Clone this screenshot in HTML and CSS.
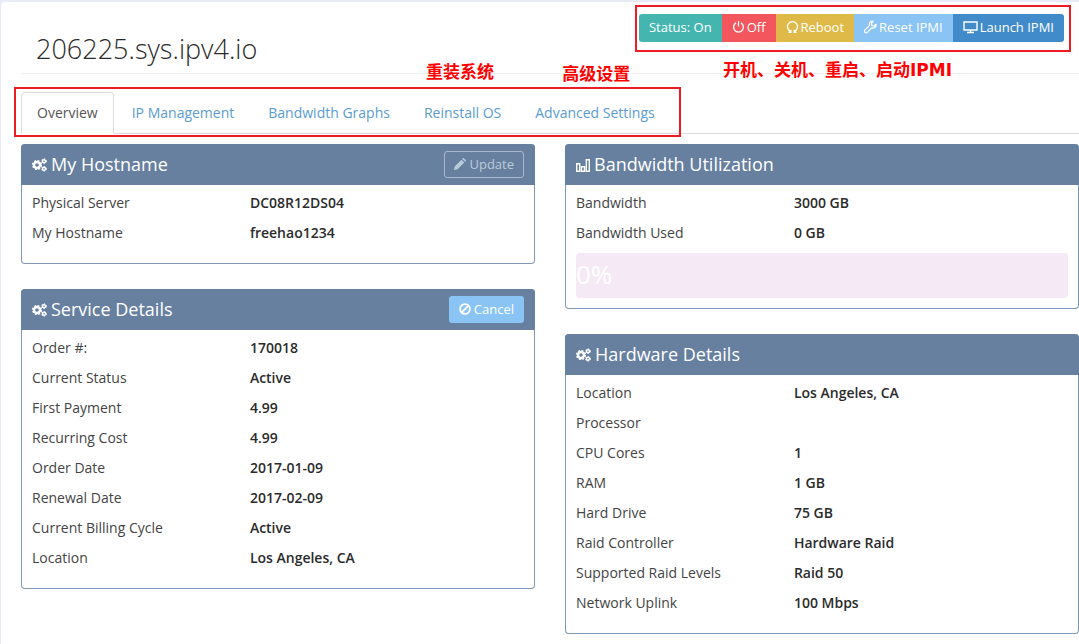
FILE: index.html
```html
<!DOCTYPE html>
<html lang="en">
<head>
<meta charset="utf-8">
<title>206225.sys.ipv4.io</title>
<link rel="stylesheet" href="styles.css">
</head>
<body>
<svg class="sprite" aria-hidden="true">
  <symbol id="cogs" viewBox="0 0 15 14">
    <circle cx="5" cy="7" r="3" fill="none" stroke="currentColor" stroke-width="2.4"/>
    <circle cx="5" cy="7" r="4.3" fill="none" stroke="currentColor" stroke-width="1.6" stroke-dasharray="1.9 1.48"/>
    <circle cx="12" cy="3.2" r="1.5" fill="none" stroke="currentColor" stroke-width="1.4"/>
    <circle cx="12" cy="3.2" r="2.4" fill="none" stroke="currentColor" stroke-width="1" stroke-dasharray="1.3 1.2"/>
    <circle cx="12" cy="10.8" r="1.5" fill="none" stroke="currentColor" stroke-width="1.4"/>
    <circle cx="12" cy="10.8" r="2.4" fill="none" stroke="currentColor" stroke-width="1" stroke-dasharray="1.3 1.2"/>
  </symbol>
</svg>
<main class="page">
  <header class="page-head">
    <h1 class="title">206225.sys.ipv4.io</h1>
    <div class="toolbar">
      <button class="btn status">Status: On</button>
      <button class="btn off"><svg class="icon" viewBox="0 0 14 14"><path d="M4.4 2.5a5.3 5.3 0 1 0 5.2 0M7 .5v6" fill="none" stroke="currentColor" stroke-width="1.4"/></svg>Off</button>
      <button class="btn reboot"><svg class="icon" viewBox="0 0 14 14"><path d="M5 11.6A5.400 5.400 0 1 1 9 11.600M2.600 12.800h2.600V10M11.400 12.800h-2.600V10" fill="none" stroke="currentColor" stroke-width="1.4"/></svg>Reboot</button>
      <button class="btn reset"><svg class="icon" viewBox="0 0 14 14"><path d="M9.8.9a3.4 3.4 0 0 0-3.9 4.6L1 10.3a1.7 1.7 0 0 0 2.5 2.5l4.9-4.9A3.4 3.4 0 0 0 13 4L10.900 5.900 8.500 5.400 8 3Z" fill="none" stroke="currentColor" stroke-width="1.4" stroke-linejoin="round"/></svg>Reset IPMI</button>
      <button class="btn launch"><svg class="icon icon-wide" viewBox="0 0 15 14"><path d="M1 2h13v8H1ZM4 12.500h7M7.500 10v2.500" fill="none" stroke="currentColor" stroke-width="1.4"/></svg>Launch IPMI</button>
      <p class="note note-power">开机、关机、重启、启动IPMI</p>
    </div>
  </header>
  <nav class="tabs">
    <a class="tab active" href="#overview">Overview</a>
    <a class="tab" href="#ip">IP Management</a>
    <a class="tab" href="#graphs">Bandwidth Graphs</a>
    <a class="tab" href="#reinstall">Reinstall OS<span class="note note-tab">重装系统</span></a>
    <a class="tab" href="#advanced">Advanced Settings<span class="note note-tab note-advanced">高级设置</span></a>
    <span class="frame"></span>
  </nav>
  <div class="columns">
    <div class="column">
      <section class="panel">
        <div class="panel-head">
          <h2 class="panel-title"><svg class="cogs"><use href="#cogs"/></svg>My Hostname</h2>
          <button class="btn small outline"><svg class="icon-s" viewBox="0 0 12 12"><path d="M0 12l.7-3.600L7.400 1.700l2.900 2.900L3.600 11.300ZM8.200.9l.6-.6q.5-.5 1.100 0l1.800 1.800q.5.5 0 1.100l-.6.600Z" fill="currentColor"/></svg>Update</button>
        </div>
        <dl class="details">
          <dt>Physical Server</dt><dd>DC08R12DS04</dd>
          <dt>My Hostname</dt><dd>freehao1234</dd>
        </dl>
      </section>
      <section class="panel">
        <div class="panel-head">
          <h2 class="panel-title"><svg class="cogs"><use href="#cogs"/></svg>Service Details</h2>
          <button class="btn small cancel"><svg class="icon-s" viewBox="0 0 12 12"><path d="M2.600 9.400l6.800-6.800" stroke="currentColor" stroke-width="1.800"/><circle cx="6" cy="6" r="4.900" fill="none" stroke="currentColor" stroke-width="1.900"/></svg>Cancel</button>
        </div>
        <dl class="details">
          <dt>Order #:</dt><dd>170018</dd>
          <dt>Current Status</dt><dd>Active</dd>
          <dt>First Payment</dt><dd>4.99</dd>
          <dt>Recurring Cost</dt><dd>4.99</dd>
          <dt>Order Date</dt><dd>2017-01-09</dd>
          <dt>Renewal Date</dt><dd>2017-02-09</dd>
          <dt>Current Billing Cycle</dt><dd>Active</dd>
          <dt>Location</dt><dd>Los Angeles, CA</dd>
        </dl>
      </section>
    </div>
    <div class="column">
      <section class="panel">
        <div class="panel-head">
          <h2 class="panel-title"><svg class="bars" viewBox="0 0 14 14"><path d="M.7 5.700h3v7.600h-3ZM5.500 8.700h3v4.600h-3ZM10.300 1.700h3v11.600h-3Z" fill="none" stroke="currentColor" stroke-width="1.400"/></svg>Bandwidth Utilization</h2>
        </div>
        <dl class="details with-meter">
          <dt>Bandwidth</dt><dd>3000 GB</dd>
          <dt>Bandwidth Used</dt><dd>0 GB</dd>
        </dl>
        <div class="meter">0%</div>
      </section>
      <section class="panel">
        <div class="panel-head">
          <h2 class="panel-title"><svg class="cogs"><use href="#cogs"/></svg>Hardware Details</h2>
        </div>
        <dl class="details">
          <dt>Location</dt><dd>Los Angeles, CA</dd>
          <dt>Processor</dt><dd></dd>
          <dt>CPU Cores</dt><dd>1</dd>
          <dt>RAM</dt><dd>1 GB</dd>
          <dt>Hard Drive</dt><dd>75 GB</dd>
          <dt>Raid Controller</dt><dd>Hardware Raid</dd>
          <dt>Supported Raid Levels</dt><dd>Raid 50</dd>
          <dt>Network Uplink</dt><dd>100 Mbps</dd>
        </dl>
      </section>
    </div>
  </div>
</main>
</body>
</html>
```
FILE: styles.css
```css
* { box-sizing: border-box; }
body {
  margin: 0;
  padding: 2px 0 0 1px;
  background: #e8ebf7;
  color: #2b2b2b;
  font: 400 14px/20px "Open Sans", "Noto Sans CJK SC", sans-serif;
}
h1, h2, p, dl, dd { margin: 0; font-weight: inherit; }
.sprite { position: absolute; width: 0; height: 0; }
.page {
  min-height: calc(100vh - 2px);
  padding: 0 0 10px 20px;
  background: #fff;
  border-radius: 4px 0 0 0;
}
.page-head {
  display: flex;
  justify-content: space-between;
  align-items: flex-start;
  height: 72px;
  padding: 12px 15px 0;
  border-bottom: 1px solid #eee;
}
.title { padding-top: 15px; font-size: 27px; font-weight: 300; line-height: 40px; }
.toolbar { position: relative; display: flex; }
.toolbar::after {
  content: "";
  position: absolute;
  inset: -9px -7px -10px -4px;
  border: 2px solid #ed1c24;
  pointer-events: none;
}
.btn {
  display: flex;
  align-items: center;
  gap: 2px;
  height: 28px;
  padding: 0 10px 2px;
  border: 0;
  color: #fff;
  font: 400 13px/18px "Open Sans", sans-serif;
  white-space: nowrap;
}
.icon { width: 13px; height: 14px; }
.icon-wide { width: 15px; }
.icon-s { width: 12px; height: 12px; }
.status { background: #45b6af; border-radius: 3px 0 0 3px; }
.off { background: #f3565d; }
.reboot { background: #dfba49; }
.reset { background: #89c4f4; }
.launch { background: #428bca; border-radius: 0 3px 3px 0; }
.note {
  position: absolute;
  color: #f00;
  font: 700 17px/20px "DejaVu Sans", "Noto Sans CJK SC", sans-serif;
  white-space: nowrap;
}
.note-power { left: 84px; top: 46px; }
.tabs {
  position: relative;
  display: flex;
  gap: 2px;
  margin-top: 18px;
  border-bottom: 1px solid #ddd;
}
.tab {
  position: relative;
  height: 41px;
  padding: 10px 15px;
  border: 1px solid transparent;
  border-radius: 4px 4px 0 0;
  color: #5b9bd1;
  text-decoration: none;
}
.active {
  margin-bottom: -1px;
  height: 42px;
  border-color: #ddd;
  border-bottom-color: #fff;
  background: #fff;
  color: #555;
}
.note-tab { left: 17px; top: -31px; }
.note-advanced { left: 42px; top: -29px; }
.frame {
  position: absolute;
  left: -7px;
  top: -5px;
  width: 667px;
  height: 50px;
  border: 2px solid #ed1c24;
  pointer-events: none;
}
.columns {
  display: grid;
  grid-template-columns: 1fr 1fr;
  gap: 30px;
  align-items: start;
  margin-top: 10px;
}
.column { display: grid; gap: 25px; }
.panel { border: 1px solid #8098b5; border-top: 0; border-radius: 4px; }
.panel-head {
  display: flex;
  justify-content: space-between;
  align-items: center;
  height: 41px;
  margin: 0 -1px;
  padding: 0 11px;
  background: #67809f;
  border-radius: 4px 4px 0 0;
  color: #fff;
}
.panel-title {
  display: flex;
  align-items: center;
  gap: 4px;
  padding-bottom: 2px;
  font-size: 18px;
  line-height: 24px;
}
.cogs { width: 15px; height: 14px; margin-top: 2px; }
.bars { width: 14px; height: 14px; margin-top: 2px; }
.small { gap: 3px; height: 27px; border-radius: 3px; }
.outline { padding: 0 9px 2px; border: 1px solid #a9b6cf; background: transparent; color: #b9cbdb; }
.cancel { background: #89c4f4; }
.details {
  display: grid;
  grid-template-columns: 31fr 39fr;
  grid-auto-rows: 30px;
  padding: 3px 10px 15px;
  line-height: 30px;
}
.details dt { color: #444; }
.details dd { font-weight: 600; }
.with-meter { padding-bottom: 5px; }
.meter {
  margin: 0 10px 10px;
  padding-bottom: 2px;
  background: #f5e9f6;
  border-radius: 4px;
  color: #fff;
  font-size: 26px;
  line-height: 43px;
}
```
